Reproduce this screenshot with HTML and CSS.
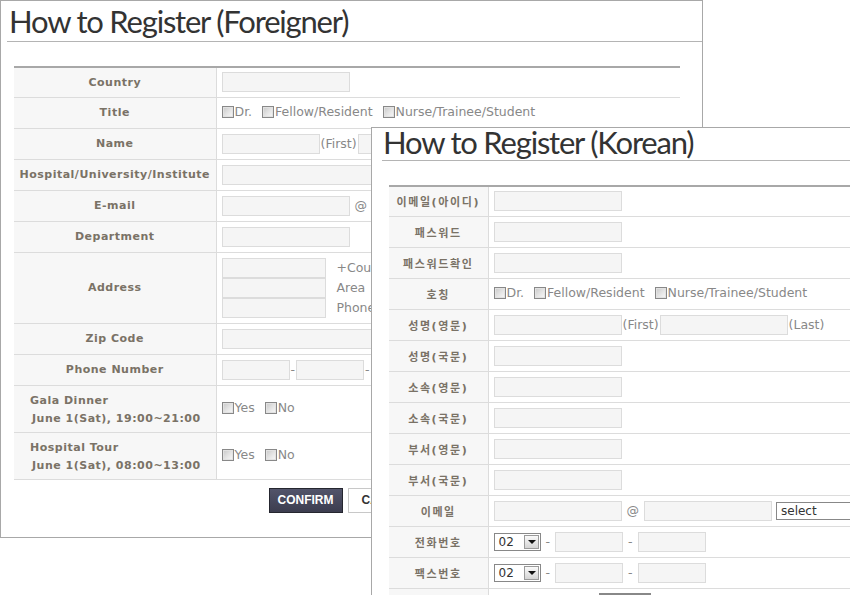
FILE: index.html
```html
<!DOCTYPE html>
<html lang="en">
<head>
    <meta charset="UTF-8">
    <title>How to Register</title>
    <link rel="stylesheet" href="styles.css">
</head>
<body>
    <div class="win win-foreign">
        <h1 class="win-title">How to Register (Foreigner)</h1>
        <table class="reg-table">
            <tr class="first">
                <th>Country</th>
                <td><span class="inp"></span></td>
            </tr>
            <tr>
                <th>Title</th>
                <td>
                    <label class="opt"><span class="chk"></span>Dr.</label>
                    <label class="opt"><span class="chk"></span>Fellow/Resident</label>
                    <label class="opt"><span class="chk"></span>Nurse/Trainee/Student</label>
                </td>
            </tr>
            <tr>
                <th>Name</th>
                <td><span class="inp w98"></span><span class="txt">(First)</span><span class="inp w98"></span></td>
            </tr>
            <tr>
                <th>Hospital/University/Institute</th>
                <td><span class="inp w400"></span></td>
            </tr>
            <tr>
                <th>E-mail</th>
                <td><span class="inp"></span><span class="txt at">@</span><span class="inp"></span></td>
            </tr>
            <tr>
                <th>Department</th>
                <td><span class="inp"></span></td>
            </tr>
            <tr class="tall">
                <th>Address</th>
                <td>
                    <div class="addr-row"><span class="inp w104"></span><span class="txt">+Country</span></div>
                    <div class="addr-row"><span class="inp w104"></span><span class="txt">Area</span></div>
                    <div class="addr-row"><span class="inp w104"></span><span class="txt">Phone</span></div>
                </td>
            </tr>
            <tr>
                <th>Zip Code</th>
                <td><span class="inp w400"></span></td>
            </tr>
            <tr>
                <th>Phone Number</th>
                <td><span class="inp w68"></span><span class="txt">-</span><span class="inp w68"></span><span class="txt">-</span><span class="inp w68"></span></td>
            </tr>
            <tr class="event">
                <th>
                    <div class="ev-name">Gala Dinner</div>
                    <div class="ev-date">June 1(Sat), 19:00~21:00</div>
                </th>
                <td>
                    <label class="opt"><span class="chk"></span>Yes</label>
                    <label class="opt"><span class="chk"></span>No</label>
                </td>
            </tr>
            <tr class="event">
                <th>
                    <div class="ev-name">Hospital Tour</div>
                    <div class="ev-date">June 1(Sat), 08:00~13:00</div>
                </th>
                <td>
                    <label class="opt"><span class="chk"></span>Yes</label>
                    <label class="opt"><span class="chk"></span>No</label>
                </td>
            </tr>
        </table>
        <div class="btns">
            <button class="btn btn-confirm">CONFIRM</button>
            <button class="btn btn-cancel">CANCEL</button>
        </div>
    </div>

    <div class="win win-korean">
        <h1 class="win-title">How to Register (Korean)</h1>
        <table class="reg-table kr">
            <tr class="first">
                <th>이메일(아이디)</th>
                <td><span class="inp"></span></td>
            </tr>
            <tr>
                <th>패스워드</th>
                <td><span class="inp"></span></td>
            </tr>
            <tr>
                <th>패스워드확인</th>
                <td><span class="inp"></span></td>
            </tr>
            <tr>
                <th>호칭</th>
                <td>
                    <label class="opt"><span class="chk"></span>Dr.</label>
                    <label class="opt"><span class="chk"></span>Fellow/Resident</label>
                    <label class="opt"><span class="chk"></span>Nurse/Trainee/Student</label>
                </td>
            </tr>
            <tr>
                <th>성명(영문)</th>
                <td><span class="inp"></span><span class="txt">(First)</span><span class="inp"></span><span class="txt">(Last)</span></td>
            </tr>
            <tr>
                <th>성명(국문)</th>
                <td><span class="inp"></span></td>
            </tr>
            <tr>
                <th>소속(영문)</th>
                <td><span class="inp"></span></td>
            </tr>
            <tr>
                <th>소속(국문)</th>
                <td><span class="inp"></span></td>
            </tr>
            <tr>
                <th>부서(영문)</th>
                <td><span class="inp"></span></td>
            </tr>
            <tr>
                <th>부서(국문)</th>
                <td><span class="inp"></span></td>
            </tr>
            <tr>
                <th>이메일</th>
                <td><span class="inp"></span><span class="txt at">@</span><span class="inp"></span><span class="sel sel-wide">select</span></td>
            </tr>
            <tr>
                <th>전화번호</th>
                <td><span class="sel sel-num">02<span class="sel-arrow"></span></span><span class="txt dash">-</span><span class="inp w68"></span><span class="txt dash">-</span><span class="inp w68"></span></td>
            </tr>
            <tr>
                <th>팩스번호</th>
                <td><span class="sel sel-num">02<span class="sel-arrow"></span></span><span class="txt dash">-</span><span class="inp w68"></span><span class="txt dash">-</span><span class="inp w68"></span></td>
            </tr>
            <tr class="last">
                <th></th>
                <td><span class="spacer"></span><span class="mini-btn"></span></td>
            </tr>
        </table>
    </div>
</body>
</html>
```

FILE: styles.css
```css
* {
    margin: 0;
    padding: 0;
    box-sizing: border-box;
}

body {
    width: 850px;
    height: 595px;
    overflow: hidden;
    position: relative;
    background: #fff;
    font-family: "DejaVu Sans", "Noto Sans CJK KR", sans-serif;
}

/* the two screenshots lie on top of each other */
.win {
    position: absolute;
    background: #fff;
    border: 1px solid #a8a8a8;
    overflow: hidden;
}

.win-foreign {
    left: 0;
    top: 0;
    width: 703px;
    height: 538px;
}

.win-korean {
    left: 371px;
    top: 127px;
    width: 479px;
    height: 468px;
    border-right: none;
    border-bottom: none;
}

.win-title {
    font-family: "Lato", sans-serif;
    font-weight: normal;
    font-size: 31px;
    letter-spacing: -1.2px;
    color: #333;
    border-bottom: 1px solid #b4b4b4;
    line-height: 40px;
    height: 41px;
    margin-left: 6px;
    padding-left: 2px;
    white-space: nowrap;
}

.win-korean .win-title {
    margin-left: 10px;
    height: 33px;
    line-height: 28px;
    padding-left: 1px;
}

.reg-table {
    border-collapse: collapse;
    margin: 24px 0 0 13px;
    width: 666px;
    border-top: 2px solid #a8a8a8;
}

.reg-table.kr {
    margin: 24px 0 0 17px;
    width: 600px;
}

.reg-table th,
.reg-table td {
    height: 31px;
    border-bottom: 1px solid #dcdcdc;
    vertical-align: middle;
    white-space: nowrap;
}

.reg-table .first th,
.reg-table .first td {
    height: 30px;
}

.reg-table th {
    width: 202px;
    background: #f7f7f7;
    border-right: 1px solid #dcdcdc;
    color: #7a7266;
    font-size: 11px;
    font-weight: bold;
    letter-spacing: 0.5px;
    text-align: center;
}

.reg-table.kr th {
    width: 99px;
    letter-spacing: 1.6px;
}

.reg-table td {
    padding-left: 5px;
    color: #888;
    font-size: 12.5px;
}

.reg-table .tall th,
.reg-table .tall td {
    height: 71px;
}

.reg-table .event th,
.reg-table .event td {
    height: 47px;
}

.reg-table .event th {
    text-align: left;
    padding-left: 16px;
    line-height: 18px;
    padding-top: 3px;
}

.reg-table .last td {
    vertical-align: top;
    padding-top: 4px;
}

.ev-date {
    padding-left: 2px;
}

.inp {
    display: inline-block;
    vertical-align: middle;
    width: 128px;
    height: 20px;
    border: 1px solid #dcdcdc;
    background: #f5f5f5;
}

.w98 { width: 98px; }
.w104 { width: 104px; }
.w68 { width: 68px; }
.w400 { width: 400px; }

.txt {
    vertical-align: middle;
    padding: 0 1px;
}

.txt.at {
    padding: 0 5px 0 5px;
}

.txt.dash {
    padding: 0 5px;
}

.addr-row {
    height: 20px;
    display: flex;
    align-items: center;
}

.addr-row .txt {
    padding-left: 11px;
}

.opt {
    display: inline-flex;
    align-items: center;
    margin-right: 6px;
}

.chk {
    display: inline-block;
    width: 12px;
    height: 12px;
    margin-right: 1px;
    border: 1px solid #888;
    background: linear-gradient(135deg, #c8c8c8 0%, #e8e8e8 60%, #f8f8f8 100%);
    box-shadow: inset 0 0 0 1px #e2e2e2;
}

.sel {
    display: inline-flex;
    align-items: center;
    vertical-align: middle;
    height: 18px;
    border: 1px solid #888;
    background: #fff;
    color: #333;
    font-size: 12px;
}

.sel-wide {
    width: 120px;
    margin-left: 4px;
    padding-left: 4px;
}

.sel-num {
    width: 47px;
    padding-left: 4px;
    justify-content: space-between;
    padding-right: 1px;
}

.sel-arrow {
    position: relative;
    width: 15px;
    height: 14px;
    border: 1px solid #9a9a9a;
    background: linear-gradient(#fafafa, #d4d4d4);
}

.sel-arrow::after {
    content: "";
    position: absolute;
    left: 3px;
    top: 4px;
    border-left: 4px solid transparent;
    border-right: 4px solid transparent;
    border-top: 4px solid #111;
}

.spacer {
    display: inline-block;
    width: 100px;
}

.mini-btn {
    display: inline-block;
    vertical-align: top;
    margin-left: 5px;
    width: 52px;
    height: 22px;
    border-top: 2px solid #888;
}

.btns {
    display: flex;
    justify-content: center;
    gap: 5px;
    width: 666px;
    margin: 8px 0 0 13px;
}

.btn {
    width: 74px;
    height: 25px;
    font-family: "Liberation Sans", Arial, sans-serif;
    font-size: 12px;
    font-weight: bold;
    cursor: pointer;
}

.btn-confirm {
    background: linear-gradient(#52546a, #3c3d4f);
    border: 1px solid #25262f;
    color: #fff;
}

.btn-cancel {
    width: 78px;
    background: #fff;
    border: 1px solid #c8c8c8;
    color: #333;
}
```
